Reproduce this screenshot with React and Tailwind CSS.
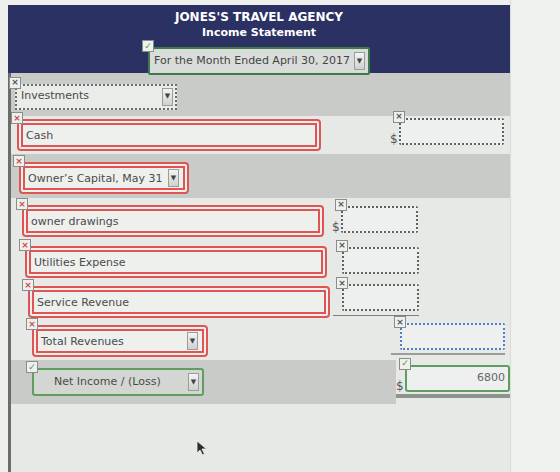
const font = "font-['DejaVu_Sans','Liberation_Sans',sans-serif]";

// small status marker sitting on a field's top-left corner
function Badge({ kind = "x", tone = "gray" }) {
  const color = tone === "red" ? "text-[#d04848]" : tone === "green" ? "text-[#4f9a4f]" : "text-[#555]";
  return (
    <span className={`absolute -left-[6px] -top-[7px] z-10 flex h-[12px] w-[12px] items-center justify-center border border-[#8a8e8a] bg-[#eef0ee] text-[9px] leading-none font-bold ${color}`}>
      {kind === "check" ? "✓" : "×"}
    </span>
  );
}

function Arrow() {
  return (
    <span className="flex h-[18px] w-[11px] shrink-0 items-center justify-center border border-[#9a9e9a] bg-gradient-to-b from-[#f4f4f4] to-[#cfd1cf] text-[7px] leading-none text-[#444]">
      ▼
    </span>
  );
}

function RedField({ label, width, select, ml }) {
  return (
    <div className={`relative ${ml}`} style={{ width }}>
      <Badge tone="red" />
      <div className="flex h-[32px] items-center rounded-[4px] border-[6px] border-double border-[#e05454] bg-[#eef0ee] pl-[3px] pr-[4px]">
        <span className="flex-1 whitespace-nowrap pt-[2px] text-[11px] text-[#4a4a4a]">{label}</span>
        {select && <Arrow />}
      </div>
    </div>
  );
}

function Amount({ dollar, width = "w-[77px]", blue, value, green }) {
  const border = green
    ? "border-2 border-solid border-[#5f9e5f] rounded-[3px]"
    : blue
    ? "border-2 border-dotted border-[#4f7fc4] rounded-[2px]"
    : "border-2 border-dotted border-[#5f635f] rounded-[2px]";
  return (
    <div className="flex items-end gap-[1px]">
      <span className={`w-[8px] text-[12px] leading-none text-[#555] ${dollar ? "" : "invisible"}`}>$</span>
      <div className={`relative ${width}`}>
        <Badge kind={green ? "check" : "x"} tone={green ? "green" : "gray"} />
        <div className={`flex h-[27px] items-start justify-end bg-[#edf0ee] px-[3px] pt-[3px] text-[11px] text-[#666] ${border}`}>
          {value}
        </div>
      </div>
    </div>
  );
}

export default function App() {
  return (
    <div className={`relative h-[472px] w-[560px] overflow-hidden bg-[#edf0ed] ${font}`}>
      <div className="ml-[8px] mt-[5px] w-[502px]">
        {/* title block */}
        <div className="flex h-[68px] flex-col items-center bg-[#2b3163] pt-[4px]">
          <div className="text-[12px] font-bold leading-[16px] text-white">JONES'S TRAVEL AGENCY</div>
          <div className="text-[11px] font-bold leading-[16px] text-white">Income Statement</div>
          <div className="relative mt-[6px]">
            <Badge kind="check" tone="green" />
            <div className="flex h-[28px] w-[222px] items-center gap-[4px] rounded-[2px] border-2 border-[#3f7a4a] bg-[#d9ddd9] pl-[4px] pr-[3px]">
              <span className="flex-1 whitespace-nowrap text-[11px] text-[#444]">For the Month Ended April 30, 2017</span>
              <Arrow />
            </div>
          </div>
        </div>

        <div className="border-l-[3px] border-[#6a6e6a] bg-[#e6e9e6]">
          {/* Investments */}
          <div className="flex h-[43px] items-center bg-[#c9cbc9] pl-[4px] pt-[4px]">
            <div className="relative w-[162px]">
              <Badge />
              <div className="flex h-[26px] items-center border-2 border-dotted border-[#6a6e6a] bg-[#e9ece9] pl-[4px] pr-[2px]">
                <span className="flex-1 whitespace-nowrap text-[11px] text-[#4a4a4a]">Investments</span>
                <Arrow />
              </div>
            </div>
          </div>

          {/* Cash */}
          <div className="flex h-[38px] items-center">
            <RedField label="Cash" width={304} ml="ml-[6px]" />
            <div className="ml-[69px] mt-[-8px]">
              <Amount dollar width="w-[105px]" />
            </div>
          </div>

          {/* Owner's Capital */}
          <div className="flex h-[44px] items-center bg-[#c9cbc9] pt-[4px]">
            <RedField label="Owner’s Capital, May 31" width={170} select ml="ml-[8px]" />
          </div>

          {/* drawings, expenses, revenue */}
          <div className="flex h-[42px] items-center pt-[4px]">
            <RedField label="owner drawings" width={302} ml="ml-[11px]" />
            <div className="ml-[8px] mt-[-4px]">
              <Amount dollar />
            </div>
          </div>
          <div className="flex h-[42px] items-center pt-[2px]">
            <RedField label="Utilities Expense" width={302} ml="ml-[14px]" />
            <div className="ml-[6px] mt-[-4px]">
              <Amount />
            </div>
          </div>
          <div className="flex h-[40px] items-center">
            <RedField label="Service Revenue" width={302} ml="ml-[17px]" />
            <div className="ml-[3px] mt-[-4px] border-b border-[#7c807c] pb-[4px]">
              <Amount />
            </div>
          </div>

          {/* Total Revenues */}
          <div className="flex h-[38px] items-center">
            <RedField label="Total Revenues" width={176} select ml="ml-[21px]" />
            <div className="ml-[183px] mt-[-4px] border-b-2 border-[#9a9e9a] pb-[3px]">
              <Amount width="w-[105px]" blue />
            </div>
          </div>

          {/* Net Income */}
          <div className="flex h-[44px] items-center">
            <div className="flex h-full w-[385px] items-center bg-[#c9cbc9] pl-[21px]">
              <div className="relative w-[172px]">
                <Badge kind="check" tone="green" />
                <div className="flex h-[28px] items-center rounded-[3px] border-2 border-[#5f9e5f] bg-[#d3d6d3] pl-[20px] pr-[3px]">
                  <span className="flex-1 whitespace-nowrap text-[11px] text-[#4a4a4a]">Net Income / (Loss)</span>
                  <Arrow />
                </div>
              </div>
            </div>
            <div className="mt-[-2px] border-b-[4px] border-[#8f938f] pb-[2px]">
              <Amount dollar width="w-[105px]" green value="6800" />
            </div>
          </div>

          <div className="h-[75px]" />
        </div>
      </div>

      {/* right-hand strip beyond the panel */}
      <div className="absolute right-0 top-0 h-full w-[50px] border-l border-[#d9ddd9] bg-[#eef1ee]" />

      {/* mouse pointer */}
      <svg className="absolute left-[196px] top-[440px]" width="12" height="16" viewBox="0 0 12 16">
        <path d="M1 1 L1 13 L4 10 L6.5 15 L8.5 14 L6 9 L10.5 9 Z" fill="#2d2d2d" stroke="#f0f0f0" strokeWidth="0.8" />
      </svg>
    </div>
  );
}
